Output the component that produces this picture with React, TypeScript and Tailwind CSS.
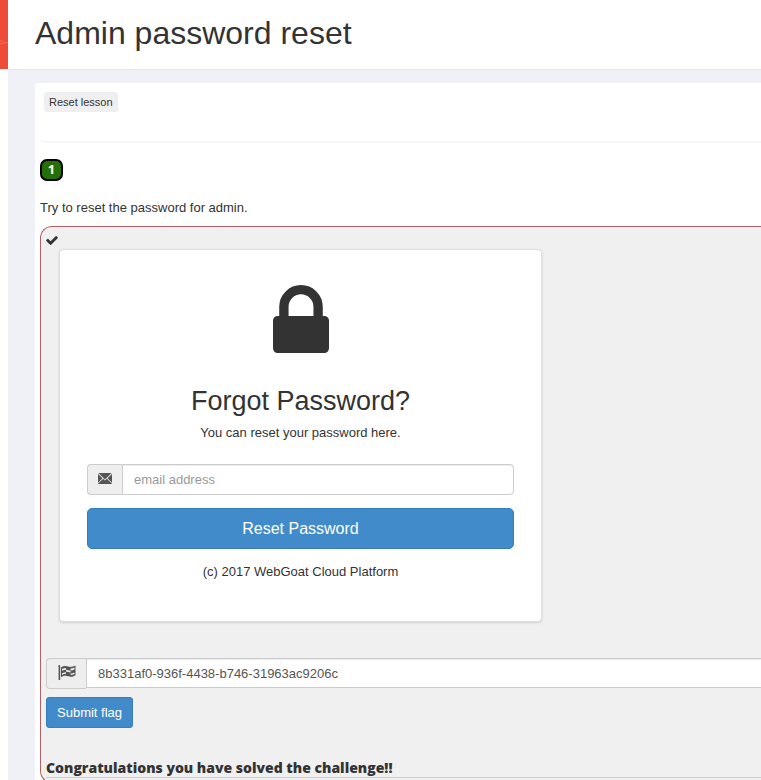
import React, { useState } from 'react';

interface IconProps {
  className?: string;
}

const LockIcon: React.FC<IconProps> = ({ className }) => (
  <svg className={className} viewBox="320 128 1152 1408" fill="currentColor" preserveAspectRatio="none" aria-hidden="true">
    <path d="M640 768h512V576q0-106-75-181t-181-75-181 75-75 181v192zm832 96v576q0 40-28 68t-68 28H416q-40 0-68-28t-28-68V864q0-40 28-68t68-28h32V576q0-184 132-316t316-132 316 132 132 316v192h32q40 0 68 28t28 68z" />
  </svg>
);

const CheckIcon: React.FC<IconProps> = ({ className }) => (
  <svg className={className} viewBox="121 334 1550 1188" fill="currentColor" aria-hidden="true">
    <path d="M1671 566q0 40-28 68l-724 724-136 136q-28 28-68 28t-68-28l-136-136-362-362q-28-28-28-68t28-68l136-136q28-28 68-28t68 28l294 295 656-657q28-28 68-28t68 28l136 136q28 28 28 68z" />
  </svg>
);

const EnvelopeIcon: React.FC<IconProps> = ({ className }) => (
  <svg className={className} viewBox="0 0 14 11" fill="currentColor" aria-hidden="true">
    <path d="M.4 0h13.200L7 6.400zM0 .9l4.500 4.300L0 9.800zM14 .9v8.900L9.500 5.200zM.2 11v-.4l5-4.800L7 7.500l1.800-1.700 5 4.800v.4z" />
  </svg>
);

const FlagIcon: React.FC<IconProps> = ({ className }) => (
  <svg className={className} viewBox="0 0 18 15" aria-hidden="true">
    <path fill="currentColor" d="M1.200 0a1 1 0 0 1 1 1v14H.6V1.800A1 1 0 0 1 1.200 0z" />
    <path fill="currentColor" d="M3 2.200C6 .6 7.600 .6 10.300 1.600c2 .8 4 .5 7.200-1V10.300c-3 1.700-5 1.800-7.200 1C7.800 10.400 6 10.600 3 12.200z" />
    <path fill="#eee" d="M4 4c1.400-.7 2.600-1.100 4-1.100v1.800C6.600 4.700 5.400 5.100 4 5.800zM8 4.800c1.600 0 2.600.9 4.600 1v1.700C10.600 7.400 9.600 6.700 8 6.600zM12.600 3.600c1.400 0 2.500-.4 3.900-1v1.800c-1.400.6-2.500 1-3.900 1zM4 8.400c1.400-.7 2.600-1.100 4-1.100v1.500c-1.400 0-2.600.4-4 1.100zM12.600 8.500c1.400 0 2.500-.4 3.900-1v1.500c-1.400.6-2.500 1-3.900 1z" />
  </svg>
);

const Sidebar: React.FC = () => (
  <aside className="w-2 shrink-0">
    <div className="flex h-[69px] flex-col justify-center bg-[#ee4b38]">
      <svg className="mt-4 h-2 w-2" viewBox="0 0 8 8" fill="none" stroke="#f26d5e" aria-hidden="true">
        <path d="M0 2h3l2 1.500h3M0 4.500h5" />
      </svg>
    </div>
  </aside>
);

const ForgotPassword: React.FC = () => {
  const [email, setEmail] = useState('');

  return (
    <section className="ml-[13px] max-w-[483px] rounded border border-[#ddd] bg-white px-[27px] pt-[35px] pb-10 text-center shadow-sm">
      <LockIcon className="mx-auto h-[68px] w-14" />
      <h2 className="mt-8 text-[27px] leading-8">Forgot Password?</h2>
      <p className="mt-[7px] leading-[18px]">You can reset your password here.</p>
      <form className="mt-[22px]" onSubmit={(e) => e.preventDefault()}>
        <div className="flex h-[31px]">
          <label htmlFor="email" className="flex w-[35px] shrink-0 items-center justify-center rounded-l border border-r-0 border-[#ccc] bg-[#eee] pb-0.5 text-[#555]">
            <EnvelopeIcon className="h-[11px] w-[14px]" />
          </label>
          <input
            id="email"
            type="email"
            aria-label="email address"
            placeholder="email address"
            value={email}
            onChange={(e) => setEmail(e.target.value)}
            className="min-w-0 grow rounded-r border border-[#ccc] bg-white px-[11px] text-[#555] shadow-[inset_0_1px_1px_rgba(0,0,0,0.075)] placeholder:text-[#999]"
          />
        </div>
        <button type="submit" className="mt-[13px] h-[41px] w-full rounded-[5px] border border-[#357ebd] bg-[#428bca] text-base text-white">
          Reset Password
        </button>
      </form>
      <p className="mt-[14px] leading-[18px]">(c) 2017 WebGoat Cloud Platform</p>
    </section>
  );
};

const FlagForm: React.FC = () => {
  const [flag, setFlag] = useState('8b331af0-936f-4438-b746-31963ac9206c');

  return (
    <form className="mt-9" onSubmit={(e) => e.preventDefault()}>
      <div className="flex h-[31px]">
        <label htmlFor="flag" className="flex w-10 shrink-0 items-center justify-center rounded-l border border-r-0 border-[#ccc] bg-[#eee] pb-0.5 text-[#555]">
          <FlagIcon className="h-[15px] w-[18px]" />
        </label>
        <input
          id="flag"
          type="text"
          aria-label="Flag"
          value={flag}
          onChange={(e) => setFlag(e.target.value)}
          className="h-[30px] min-w-0 grow border border-r-0 border-[#ccc] bg-white px-[11px] text-[#555] shadow-[inset_0_1px_1px_rgba(0,0,0,0.075)]"
        />
      </div>
      <button type="submit" className="mt-2 h-[31px] rounded-[3px] border border-[#357ebd] bg-[#428bca] px-[10px] text-white">
        Submit flag
      </button>
    </form>
  );
};

const App: React.FC = () => {
  return (
    <div className="flex min-h-screen overflow-hidden bg-white font-['Liberation_Sans',Arial,sans-serif] text-[13px] text-[#333]">
      <Sidebar />
      <div className="flex min-w-0 grow flex-col">
        <header className="h-[70px] border-b border-[#e4e5eb] bg-white px-[27px] pt-[13px]">
          <h1 className="text-[32px] leading-10">Admin password reset</h1>
        </header>
        <main className="grow bg-[#f0f1f7] pt-[13px] pl-[27px]">
          <div className="rounded-tl bg-white pl-[5px]">
            <div className="h-[60px] rounded-bl border-b-2 border-[#f7f7f7] px-1 pt-[9px]">
              <button type="button" className="block h-5 rounded-[3px] bg-[#efefef] px-[5px] text-[11px]">
                Reset lesson
              </button>
            </div>
            <nav className="pt-4">
              <a href="#1" className="flex h-[22px] w-[23px] items-center justify-center rounded-[7px] border-2 border-black bg-[#247006] font-['Open_Sans',sans-serif] font-bold text-white">
                1
              </a>
            </nav>
            <p className="mt-[18px] leading-[18px]">Try to reset the password for admin.</p>
            <div className="mt-[9px] rounded-l-xl border border-r-0 border-[#b06068] bg-[#f0f0f0] pt-[9px] pb-1 pl-[5px]">
              <CheckIcon className="mb-1 h-[9px] w-3" />
              <ForgotPassword />
              <FlagForm />
              <p className="mt-8 border-b border-[#ccc] pb-0.5 font-['Open_Sans',sans-serif] text-sm leading-[15px] font-extrabold">
                Congratulations you have solved the challenge!!
              </p>
            </div>
          </div>
        </main>
      </div>
    </div>
  );
};

export default App;
